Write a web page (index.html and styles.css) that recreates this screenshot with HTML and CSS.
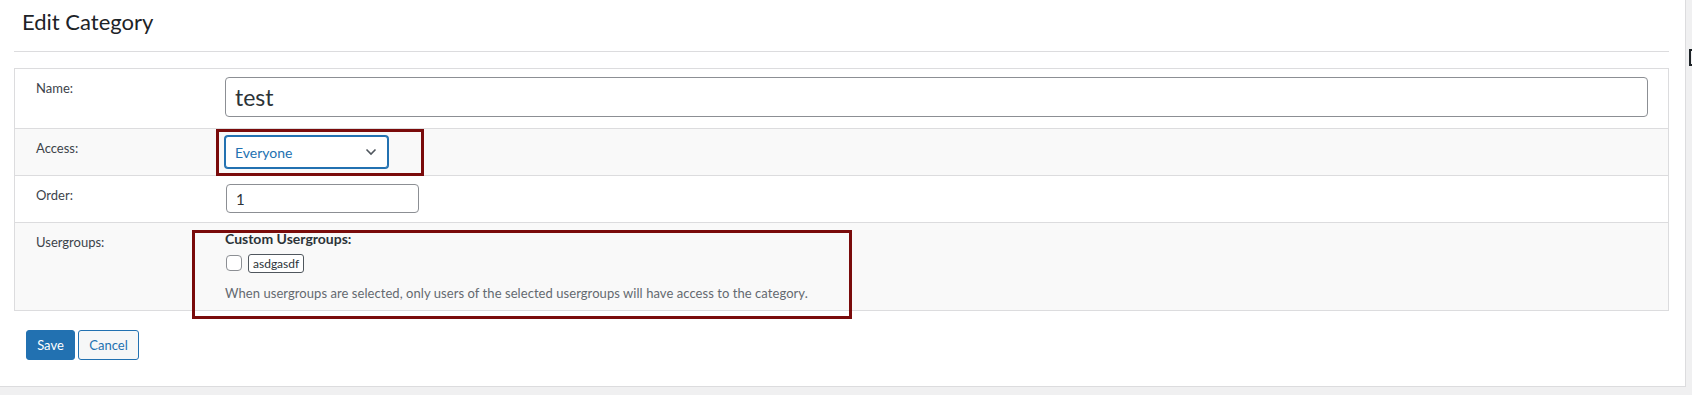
FILE: index.html
```html
<!DOCTYPE html>
<html lang="en">
<head>
  <meta charset="UTF-8">
  <title>Edit Category</title>
  <link rel="stylesheet" href="styles.css">
</head>
<body>

  <!-- Main panel -->
  <div class="panel">
    <h1 class="page-title">Edit Category</h1>
    <div class="title-rule"></div>

    <!-- Category form -->
    <div class="form-table">
      <div class="form-row">
        <div class="form-label">Name:</div>
        <div class="form-field">
          <input class="text-input name-input" type="text" value="test">
        </div>
      </div>

      <div class="form-row alt access-row">
        <div class="form-label">Access:</div>
        <div class="form-field">
          <div class="mark mark-access"></div>
          <div class="select-box">
            <span>Everyone</span>
            <svg class="chevron" width="12" height="8" viewBox="0 0 12 8">
              <path d="M1.5 1.5 L6 6 L10.5 1.5" fill="none" stroke="#50575e" stroke-width="1.6"/>
            </svg>
          </div>
        </div>
      </div>

      <div class="form-row order-row">
        <div class="form-label">Order:</div>
        <div class="form-field">
          <input class="text-input order-input" type="text" value="1">
        </div>
      </div>

      <div class="form-row alt groups-row">
        <div class="form-label">Usergroups:</div>
        <div class="form-field">
          <div class="mark mark-groups"></div>
          <div class="groups-title">Custom Usergroups:</div>
          <div class="group-item">
            <span class="check"></span>
            <span class="tag">asdgasdf</span>
          </div>
          <p class="description">When usergroups are selected, only users of the selected usergroups will have access to the category.</p>
        </div>
      </div>
    </div>

    <div class="actions">
      <button class="btn btn-primary">Save</button>
      <button class="btn btn-secondary">Cancel</button>
    </div>
  </div>

  <div class="edge-tab"></div>

</body>
</html>
```

FILE: styles.css
```css
html {
  height: 395px;
  overflow: hidden;
}

body {
  margin: 0;
  background-color: #f0f0f1;
  font-family: Lato, "Noto Sans", sans-serif;
  color: #3c434a;
  font-size: 13px;
  height: 395px;
  overflow: hidden;
  position: relative;
}

/* White panel */
.panel {
  width: 1655px;
  height: 386px;
  background: #fff;
  border-right: 1px solid #dcdcde;
  border-bottom: 1px solid #dcdcde;
  padding: 0 16px 0 14px;
  box-sizing: content-box;
}

.page-title {
  margin: 0;
  padding: 7px 0 0 8px;
  font-size: 22px;
  font-weight: 400;
  line-height: 30px;
  color: #1d2327;
}

.title-rule {
  margin-top: 14px;
  border-top: 1px solid #dcdcde;
}

/* Form table */
.form-table {
  margin-top: 16px;
  border: 1px solid #dcdcde;
}

.form-row {
  display: grid;
  grid-template-columns: 210px 1fr;
  min-height: 59px;
  border-bottom: 1px solid #dcdcde;
}

.form-row:last-child {
  border-bottom: none;
}

.form-row.alt {
  background: #f9f9f9;
}

.access-row,
.order-row {
  min-height: 46px;
}

.groups-row {
  min-height: 87px;
}

.form-label {
  padding: 9px 0 0 21px;
  line-height: 20px;
  color: #3c434a;
}

.form-field {
  position: relative;
  padding-top: 8px;
}

.access-row .form-field {
  padding-top: 7px;
}

.groups-row .form-field {
  padding-top: 6px;
}

.text-input {
  display: block;
  box-sizing: border-box;
  border: 1px solid #8c8f94;
  border-radius: 4px;
  background: #fff;
  font-family: inherit;
  color: #2c3338;
  padding: 0 9px;
}

.name-input {
  width: 1423px;
  height: 40px;
  font-size: 23px;
}

.order-input {
  width: 193px;
  height: 29px;
  font-size: 15px;
  margin-left: 1px;
}

.select-box {
  box-sizing: border-box;
  width: 163px;
  height: 32px;
  border: 1px solid #2271b1;
  box-shadow: 0 0 0 1px #2271b1;
  border-radius: 3px;
  background: #fff;
  color: #2271b1;
  font-size: 14px;
  display: flex;
  align-items: center;
  justify-content: space-between;
  padding: 0 10px 0 9px;
}

/* Annotation boxes */
.mark {
  position: absolute;
  box-sizing: border-box;
  border: 3px solid #7a0b0b;
  z-index: 5;
}

.mark-access {
  left: -9px;
  top: 0;
  width: 208px;
  height: 47px;
}

.mark-groups {
  left: -33px;
  top: 7px;
  width: 660px;
  height: 89px;
}

/* Usergroups */
.groups-title {
  font-size: 14px;
  font-weight: 700;
  line-height: 20px;
  color: #2c3338;
}

.group-item {
  display: flex;
  align-items: center;
  gap: 6px;
  margin-top: 4px;
  height: 20px;
}

.check {
  width: 16px;
  height: 16px;
  box-sizing: border-box;
  border: 1px solid #8c8f94;
  border-radius: 4px;
  background: #fff;
  margin-left: 1px;
}

.tag {
  box-sizing: border-box;
  height: 19px;
  padding: 0 4px;
  border: 1px solid #50575e;
  border-radius: 3px;
  font-size: 12px;
  line-height: 17px;
  color: #2c3338;
  background: #fff;
}

.description {
  margin: 10px 0 0;
  line-height: 20px;
  color: #646970;
  font-size: 13px;
  letter-spacing: 0.06px;
}

/* Buttons */
.actions {
  display: flex;
  gap: 3px;
  padding: 19px 0 0 12px;
}

.btn {
  height: 30px;
  border-radius: 3px;
  font-family: inherit;
  font-size: 13px;
  padding: 0 10px;
  cursor: pointer;
}

.btn-primary {
  width: 49px;
  background: #2271b1;
  border: 1px solid #2271b1;
  color: #fff;
}

.btn-secondary {
  width: 61px;
  background: #f6f7f7;
  border: 1px solid #2271b1;
  color: #2271b1;
}

.edge-tab {
  position: absolute;
  left: 1689px;
  top: 49px;
  width: 6px;
  height: 17px;
  box-sizing: border-box;
  border: 2px solid #1d2327;
  border-right: none;
}
```
